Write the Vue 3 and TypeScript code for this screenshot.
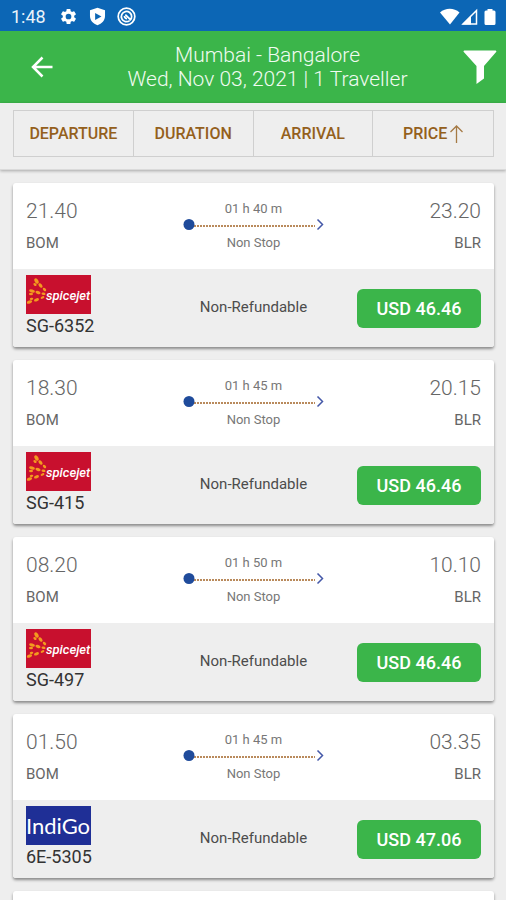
<script setup lang="ts">
import { ref } from 'vue'

type Airline = 'spicejet' | 'indigo'

interface Flight {
  depart: string
  arrive: string
  duration: string
  airline: Airline
  code: string
  price: string
}

const sortKeys = ['DEPARTURE', 'DURATION', 'ARRIVAL', 'PRICE']
const activeSort = ref('PRICE')

const flights: Flight[] = [
  { depart: '21.40', arrive: '23.20', duration: '01 h 40 m', airline: 'spicejet', code: 'SG-6352', price: 'USD 46.46' },
  { depart: '18.30', arrive: '20.15', duration: '01 h 45 m', airline: 'spicejet', code: 'SG-415', price: 'USD 46.46' },
  { depart: '08.20', arrive: '10.10', duration: '01 h 50 m', airline: 'spicejet', code: 'SG-497', price: 'USD 46.46' },
  { depart: '01.50', arrive: '03.35', duration: '01 h 45 m', airline: 'indigo', code: '6E-5305', price: 'USD 47.06' },
]
</script>

<template>
  <div class="screen">
    <div class="status">
      <span class="clock">1:48</span>
      <svg class="sys" viewBox="0 0 24 24" aria-hidden="true">
        <path fill="#fff" fill-rule="evenodd" d="M19.14 12.94a7 7 0 0 0 0-1.88l2.03-1.58a.5.5 0 0 0 .12-.61l-1.92-3.32a.5.5 0 0 0-.59-.22l-2.39.96a7 7 0 0 0-1.62-.94l-.36-2.54a.5.5 0 0 0-.48-.41h-3.84a.5.5 0 0 0-.47.41l-.36 2.54a7 7 0 0 0-1.62.94l-2.39-.96a.5.5 0 0 0-.59.22L2.74 8.87a.5.5 0 0 0 .12.61l2.03 1.58a7 7 0 0 0 0 1.88l-2.03 1.58a.5.5 0 0 0-.12.61l1.92 3.32c.12.22.37.29.59.22l2.39-.96c.5.38 1.03.7 1.62.94l.36 2.54c.05.24.24.41.48.41h3.84c.24 0 .44-.17.47-.41l.36-2.54a7 7 0 0 0 1.62-.94l2.39.96c.22.08.47 0 .59-.22l1.92-3.32a.5.5 0 0 0-.12-.61zM12 15.6a3.6 3.6 0 1 1 0-7.2 3.6 3.6 0 0 1 0 7.2z" />
      </svg>
      <svg class="sys" viewBox="0 0 24 24" aria-hidden="true">
        <path fill="#fff" fill-rule="evenodd" d="M12 1 2.500 4v7.500c0 5.500 4 9.800 9.500 11.500 5.500-1.700 9.500-6 9.500-11.500V4zM9 7.500l8 4.500-8 4.500z" />
      </svg>
      <svg class="sys" viewBox="0 0 24 24" fill="none" stroke="#fff" stroke-width="2.200" aria-hidden="true">
        <circle cx="12" cy="12" r="10.500" />
        <path d="M16 17.200A6.500 6.500 0 1 1 18.500 12c0 1.800-.6 3-1.500 4l-6.500-6.500" />
        <path d="M9.500 11.500c0 2 1.200 3.200 3.200 3.200" />
      </svg>
      <svg class="net" viewBox="0 0 58 18" aria-hidden="true">
        <path fill="#fff" d="M0 4.500C5.500-.5 14-.5 19.500 4.500L10 16.500z" />
        <path fill="none" stroke="#fff" stroke-width="1.500" d="M23 16 36.500 2.500V16z" />
        <path fill="#fff" d="M22 16.500 31 7.500v9z" />
        <path fill="#fff" d="M47.500 2.500V1h5v1.500h1.500a1.500 1.500 0 0 1 1.500 1.500v11.500a1.500 1.500 0 0 1-1.500 1.500h-8a1.500 1.500 0 0 1-1.500-1.500V4a1.500 1.500 0 0 1 1.500-1.500z" />
      </svg>
    </div>

    <header class="bar">
      <button class="icon-btn back" type="button" aria-label="Back">
        <svg width="22" height="22" viewBox="0 0 22 22" fill="none" stroke="#fff" stroke-width="2.500">
          <path d="M21.500 11H2M11.500 1.500 2 11l9.500 9.500" />
        </svg>
      </button>
      <h1 class="title">Mumbai - Bangalore<br />Wed, Nov 03, 2021 | 1 Traveller</h1>
      <button class="icon-btn" type="button" aria-label="Filter">
        <svg width="34" height="34" viewBox="0 0 34 34">
          <path fill="#fff" d="M1.500.5h31a.8.8 0 0 1 .6 1.400L21 16v12.500l-7.500 5.500V16L.8 1.900A.8.8 0 0 1 1.500.5z" />
        </svg>
      </button>
    </header>

    <nav class="sorts">
      <div class="sort-group">
        <button v-for="key in sortKeys" :key="key" class="sort" type="button" @click="activeSort = key">
          {{ key }}
          <svg v-if="activeSort === key" width="13" height="18" viewBox="0 0 13 18" fill="none" stroke="#a57a45" stroke-width="1.300">
            <path d="M6.500 18V1M.5 7l6-6 6 6" />
          </svg>
        </button>
      </div>
    </nav>

    <main class="list">
      <article v-for="flight in flights" :key="flight.code" class="card">
        <div class="route">
          <div class="stop">
            <span class="time">{{ flight.depart }}</span>
            <span class="city">BOM</span>
          </div>
          <div class="leg">
            <span>{{ flight.duration }}</span>
            <svg width="142" height="14" viewBox="0 0 142 14" fill="none" aria-hidden="true">
              <path stroke="#b98a5c" stroke-width="2" stroke-dasharray="2 1" d="M11 7H132" />
              <circle cx="6" cy="5.500" r="5.500" fill="#1f4b9b" />
              <path stroke="#4458a8" stroke-width="1.500" d="m134.500 .5 5 5-5 5" />
            </svg>
            <span>Non Stop</span>
          </div>
          <div class="stop end">
            <span class="time">{{ flight.arrive }}</span>
            <span class="city">BLR</span>
          </div>
        </div>
        <div class="fare">
          <div class="carrier">
            <svg v-if="flight.airline === 'spicejet'" class="logo" viewBox="0 0 65 39" role="img" aria-label="SpiceJet">
              <rect width="65" height="39" fill="#c8102e" />
              <g fill="#f39a1f">
                <ellipse cx="10.500" cy="6" rx="3" ry="1.800" transform="rotate(60 10.500 6)" />
                <ellipse cx="9" cy="9.500" rx="1.800" ry="1.300" transform="rotate(40 9 9.500)" />
                <ellipse cx="14.500" cy="10.500" rx="2.600" ry="1.600" transform="rotate(50 14.500 10.500)" />
                <ellipse cx="18.500" cy="14.500" rx="2" ry="1.300" transform="rotate(45 18.500 14.500)" />
                <ellipse cx="6" cy="16" rx="3" ry="1.600" transform="rotate(15 6 16)" />
                <ellipse cx="5" cy="19" rx="2" ry="1.200" />
                <ellipse cx="12" cy="17.500" rx="2.600" ry="1.600" transform="rotate(15 12 17.500)" />
                <ellipse cx="17.500" cy="18.800" rx="2" ry="1.200" transform="rotate(10 17.500 18.800)" />
                <ellipse cx="3.500" cy="27" rx="2.800" ry="1.500" transform="rotate(-20 3.500 27)" />
                <ellipse cx="5.500" cy="23.800" rx="1.800" ry="1.100" transform="rotate(-10 5.500 23.800)" />
                <ellipse cx="10.500" cy="24.800" rx="2.600" ry="1.500" transform="rotate(-20 10.500 24.800)" />
                <ellipse cx="16.500" cy="22.500" rx="2" ry="1.200" transform="rotate(-25 16.500 22.500)" />
              </g>
              <text class="spice" x="20" y="25">spicejet</text>
            </svg>
            <svg v-else class="logo" viewBox="0 0 65 39" role="img" aria-label="IndiGo">
              <rect width="65" height="39" fill="#1f2f96" />
              <text class="indigo" x="32" y="28" text-anchor="middle">IndiGo</text>
            </svg>
            <span class="code">{{ flight.code }}</span>
          </div>
          <span class="terms">Non-Refundable</span>
          <button class="price" type="button">{{ flight.price }}</button>
        </div>
      </article>
      <article class="card next"></article>
    </main>
  </div>
</template>

<style>
body {
  background: #eeeeee;
}
</style>

<style scoped>
.screen {
  display: flex;
  flex-direction: column;
  height: 100vh;
  overflow: hidden;
  background: #eeeeee;
  font-family: Roboto, sans-serif;
}

button {
  padding: 0;
  border: 0;
  background: none;
  font-family: inherit;
  cursor: pointer;
}

.status {
  display: flex;
  flex: none;
  align-items: center;
  gap: 10px;
  height: 31px;
  padding: 2px 8px 0 11px;
  box-sizing: border-box;
  background: #0c66b5;
}

.clock {
  margin-right: 3px;
  color: #e9f2fa;
  font-size: 18px;
  line-height: 20px;
}

.sys {
  width: 19px;
  height: 19px;
}

.net {
  width: 58px;
  height: 18px;
  margin-left: auto;
}

.bar {
  display: grid;
  flex: none;
  grid-template-columns: 72px 1fr 43px;
  align-items: center;
  height: 72px;
  padding-left: 10px;
  background: #3bb54a;
}

.icon-btn {
  display: flex;
}

.back {
  padding-left: 21px;
}

.title {
  margin: 0;
  padding-right: 10px;
  color: #f0fbf1;
  font-size: 21px;
  font-weight: 300;
  line-height: 24px;
  text-align: center;
  white-space: nowrap;
}

.sorts {
  z-index: 1;
  flex: none;
  padding: 7px 12px 12px 13px;
  border-bottom: 1px solid #dadada;
  background: #eeeeee;
  box-shadow: 0 1px 3px rgba(0, 0, 0, 0.3);
}

.sort-group {
  display: grid;
  grid-template-columns: repeat(4, 1fr);
  border: 1px solid #cfcfcf;
}

.sort {
  display: flex;
  align-items: center;
  justify-content: center;
  gap: 3px;
  height: 45px;
  border-right: 1px solid #cfcfcf;
  color: #94601c;
  font-size: 16px;
  font-weight: 500;
}

.sort:last-child {
  border-right: 0;
}

.list {
  display: flex;
  flex: 1;
  flex-direction: column;
  gap: 13px;
  min-height: 0;
  padding: 13px 12px 0 13px;
  overflow-y: auto;
  scrollbar-width: none;
}

.card {
  flex: none;
  border-radius: 3px;
  background: #ffffff;
  box-shadow: 0 2px 3px rgba(0, 0, 0, 0.42);
}

.next {
  height: 164px;
}

.route,
.fare {
  display: grid;
  grid-template-columns: 1fr auto 1fr;
  padding: 0 13px;
}

.route {
  height: 86px;
  align-items: center;
}

.stop {
  display: flex;
  flex-direction: column;
  gap: 8px;
  padding-top: 1px;
  color: #666666;
}

.end {
  align-items: flex-end;
}

.time {
  font-size: 21px;
  font-weight: 300;
  line-height: 24px;
}

.city {
  font-size: 15px;
  line-height: 24px;
}

.leg {
  display: flex;
  flex-direction: column;
  align-items: center;
  gap: 2px;
  padding-bottom: 1px;
  color: #777777;
  font-size: 13px;
  line-height: 16px;
}

.fare {
  align-items: center;
  height: 78px;
  border-radius: 0 0 3px 3px;
  background: #eeeeee;
}

.carrier {
  display: flex;
  flex-direction: column;
  padding-bottom: 3px;
}

.logo {
  width: 65px;
  height: 39px;
}

.spice {
  fill: #ffffff;
  font-size: 13px;
  font-style: italic;
  font-weight: 500;
}

.indigo {
  fill: #ffffff;
  font-family: Lato, sans-serif;
  font-size: 22px;
}

.code {
  color: #333333;
  font-size: 18px;
  line-height: 24px;
}

.terms {
  padding-bottom: 2px;
  color: #4c4c4c;
  font-size: 15px;
  line-height: 20px;
}

.price {
  justify-self: end;
  width: 124px;
  height: 39px;
  border-radius: 6px;
  background: #3bb54a;
  color: #ffffff;
  font-size: 18px;
  font-weight: 500;
}
</style>
